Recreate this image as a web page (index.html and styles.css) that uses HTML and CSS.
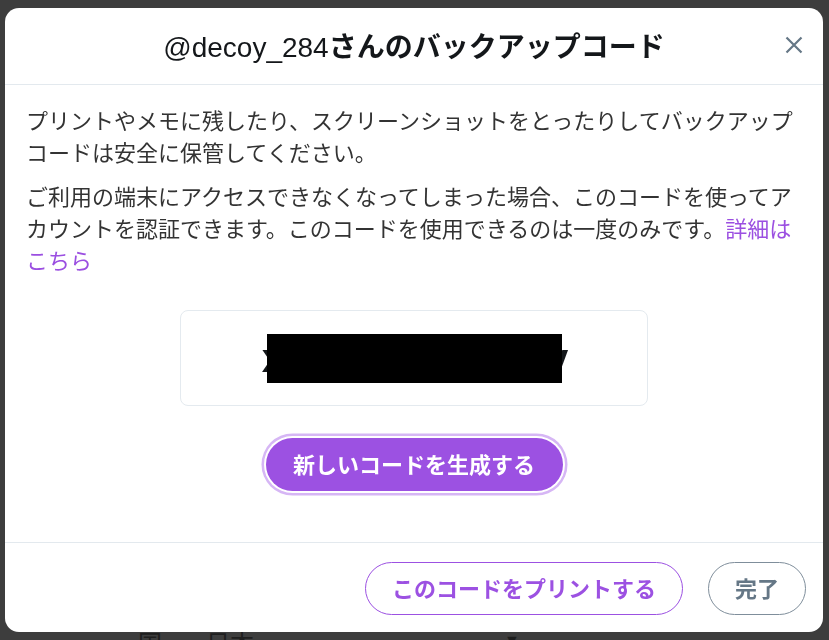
FILE: index.html
```html
<!DOCTYPE html>
<html lang="ja">
<head>
  <meta charset="UTF-8">
  <meta name="viewport" content="width=device-width, initial-scale=1.0">
  <title>バックアップコード</title>
  <link rel="stylesheet" href="styles.css">
</head>
<body>
  <!-- dimmed page behind the dialog -->
  <div class="page">
    <div class="page-row">
      <span class="page-label">国</span>
      <span class="page-value">日本</span>
      <span class="page-caret">▼</span>
    </div>
  </div>

  <div class="modal" role="dialog" aria-labelledby="modal-title">
    <div class="modal-header">
      <span></span>
      <h1 class="modal-title" id="modal-title"><span class="handle">@decoy_284</span>さんのバックアップコード</h1>
      <button class="close" aria-label="閉じる">
        <svg viewBox="0 0 20 20" width="20" height="20">
          <path d="M2.5 2.5 L17.5 17.5 M17.5 2.5 L2.5 17.5" />
        </svg>
      </button>
    </div>

    <div class="modal-body">
      <p>プリントやメモに残したり、スクリーンショットをとったりしてバックアップコードは安全に保管してください。</p>
      <p>ご利用の端末にアクセスできなくなってしまった場合、このコードを使ってアカウントを認証できます。このコードを使用できるのは一度のみです。<a href="#" class="link">詳細はこちら</a></p>

      <div class="code-box">
        <div class="code">
          <span class="code-end">x</span>
          <span class="redacted"></span>
          <span class="code-end">y</span>
        </div>
      </div>

      <div class="generate-wrap">
        <button class="btn btn-primary">新しいコードを生成する</button>
      </div>
    </div>

    <div class="modal-footer">
      <button class="btn btn-outline">このコードをプリントする</button>
      <button class="btn btn-muted">完了</button>
    </div>
  </div>
</body>
</html>
```

FILE: styles.css
```css
* {
  box-sizing: border-box;
}

body {
  margin: 0;
  background-color: #3d3d3d;
  font-family: 'Liberation Sans', 'Noto Sans CJK JP', sans-serif;
  color: #14171a;
  overflow: hidden;
  height: 640px;
}

/* page behind the overlay */
.page {
  padding-top: 624px;
}

.page-row {
  display: flex;
  align-items: flex-start;
  padding-left: 138px;
  font-size: 24px;
  color: #1e1e1e;
}

.page-value {
  margin-left: 44px;
}

.page-caret {
  margin-left: 250px;
  font-size: 16px;
  padding-top: 8px;
}

/* dialog */
.modal {
  position: fixed;
  top: 8px;
  left: 5px;
  width: 818px;
  height: 624px;
  background-color: #fff;
  border-radius: 14px;
  display: flex;
  flex-direction: column;
  overflow: hidden;
}

.modal-header {
  height: 77px;
  flex-shrink: 0;
  display: grid;
  grid-template-columns: 1fr auto 1fr;
  align-items: center;
  border-bottom: 1px solid #e3e9ee;
  padding-bottom: 2px;
}

.modal-title {
  margin: 0;
  font-size: 28px;
  font-weight: bold;
  color: #14171a;
  white-space: nowrap;
}

.handle {
  font-weight: normal;
}

.close {
  justify-self: end;
  margin-right: 19px;
  padding: 0;
  border: none;
  background: none;
  width: 20px;
  height: 20px;
  cursor: pointer;
}

.close svg {
  display: block;
}

.close path {
  stroke: #657786;
  stroke-width: 2.2;
  fill: none;
}

.modal-body {
  flex: 1;
  padding: 21px 21px 0;
  border-bottom: 1px solid #e3e9ee;
}

.modal-body p {
  margin: 0 0 12px;
  font-size: 22px;
  line-height: 32px;
  color: #333;
}

.link {
  color: #9b4fe1;
  text-decoration: none;
}

.code-box {
  width: 468px;
  height: 96px;
  margin: 32px auto 0;
  border: 1.5px solid #e4eaef;
  border-radius: 8px;
  display: flex;
  justify-content: center;
  align-items: center;
}

.code {
  display: flex;
  align-items: center;
  font-size: 40px;
  font-weight: bold;
  color: #14171a;
  line-height: 1;
  padding-left: 2px;
}

.redacted {
  display: block;
  width: 295px;
  height: 49px;
  background-color: #000;
  position: relative;
  margin: 0 -16px 0 -17px;
}

.generate-wrap {
  display: flex;
  justify-content: center;
  margin-top: 32px;
}

.btn {
  font-family: 'Liberation Sans', 'Noto Sans CJK JP', sans-serif;
  font-size: 22px;
  font-weight: bold;
  height: 53px;
  border-radius: 27px;
  padding: 0 26px 4px;
  cursor: pointer;
  background: #fff;
}

.btn-primary {
  background-color: #9c51e2;
  color: #fff;
  border: none;
  width: 297px;
  box-shadow: 0 0 0 2px #fff, 0 0 0 4.5px #d6b6f5;
}

.modal-footer {
  height: 89px;
  flex-shrink: 0;
  display: flex;
  justify-content: flex-end;
  align-items: center;
  gap: 25px;
  padding: 2px 17px 0 0;
}

.btn-outline {
  border: 1.5px solid #9c51e2;
  color: #9c51e2;
  width: 318px;
}

.btn-muted {
  border: 1.5px solid #7f8e9b;
  color: #657786;
  width: 98px;
}
```
